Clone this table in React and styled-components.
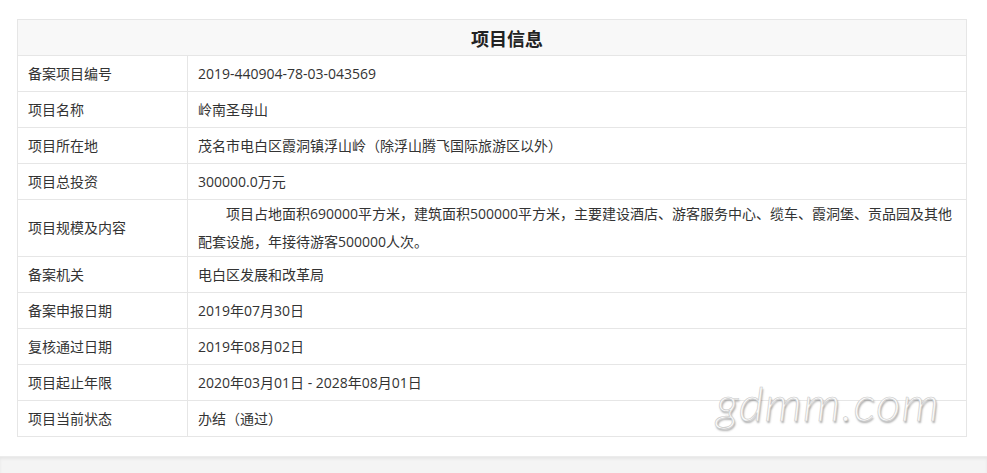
import React from 'react'
import styled, { createGlobalStyle } from 'styled-components'

const GlobalStyle = createGlobalStyle`
  html, body {
    margin: 0;
    padding: 0;
    background: #fff;
  }
  body {
    font-family: "Open Sans", "Noto Sans CJK SC", sans-serif;
    color: #333;
  }
`

const Page = styled.div`
  display: flex;
  flex-direction: column;
  min-height: 473px;
`

const Content = styled.div`
  position: relative;
  padding: 19px 20px 19px 17px;
`

const InfoTable = styled.table`
  width: 100%;
  border-collapse: collapse;
  table-layout: fixed;
  font-size: 14px;
  color: #333;
`

const Col = styled.col`
  width: ${p => p.$width || 'auto'};
`

const HeadCell = styled.th`
  height: 35px;
  padding: 0 0 0 30px;
  background: #f8f8f8;
  border: 1px solid #e6e6e6;
  font-size: 18px;
  font-weight: 700;
  color: #222;
  text-align: center;
  vertical-align: middle;
`

const Cell = styled.td`
  height: 35px;
  padding: 0 10px;
  border: 1px solid #e6e6e6;
  line-height: 28px;
  vertical-align: middle;
  text-indent: ${p => (p.$indent ? '2em' : '0')};
`

const Watermark = styled.div`
  position: absolute;
  right: 47px;
  bottom: 25px;
  font-family: Lato, "Open Sans", sans-serif;
  font-weight: 300;
  font-style: italic;
  font-size: 48px;
  letter-spacing: 1px;
  color: #fbfbfb;
  -webkit-text-stroke: 0.6px #c9c9c9;
  text-shadow: 1px 2px 2px rgba(0, 0, 0, 0.35);
  pointer-events: none;
`

const Footer = styled.div`
  flex: 1;
  background: #f4f4f4;
  box-shadow: inset 0 2px 3px rgba(0, 0, 0, 0.06);
  border-top: 1px solid #ececec;
`

const rows = [
  ['备案项目编号', '2019-440904-78-03-043569'],
  ['项目名称', '岭南圣母山'],
  ['项目所在地', '茂名市电白区霞洞镇浮山岭（除浮山腾飞国际旅游区以外）'],
  ['项目总投资', '300000.0万元'],
  [
    '项目规模及内容',
    '项目占地面积690000平方米，建筑面积500000平方米，主要建设酒店、游客服务中心、缆车、霞洞堡、贡品园及其他配套设施，年接待游客500000人次。',
    true,
  ],
  ['备案机关', '电白区发展和改革局'],
  ['备案申报日期', '2019年07月30日'],
  ['复核通过日期', '2019年08月02日'],
  ['项目起止年限', '2020年03月01日 - 2028年08月01日'],
  ['项目当前状态', '办结（通过）'],
]

const App = () => {
  return (
    <Page>
      <GlobalStyle />
      <Content>
        <InfoTable>
          <colgroup>
            <Col $width="170px" />
            <Col />
          </colgroup>
          <thead>
            <tr>
              <HeadCell colSpan={2}>项目信息</HeadCell>
            </tr>
          </thead>
          <tbody>
            {rows.map(([label, value, indent]) => (
              <tr key={label}>
                <Cell>{label}</Cell>
                <Cell $indent={indent}>{value}</Cell>
              </tr>
            ))}
          </tbody>
        </InfoTable>
        <Watermark>gdmm.com</Watermark>
      </Content>
      <Footer />
    </Page>
  )
}

export default App
